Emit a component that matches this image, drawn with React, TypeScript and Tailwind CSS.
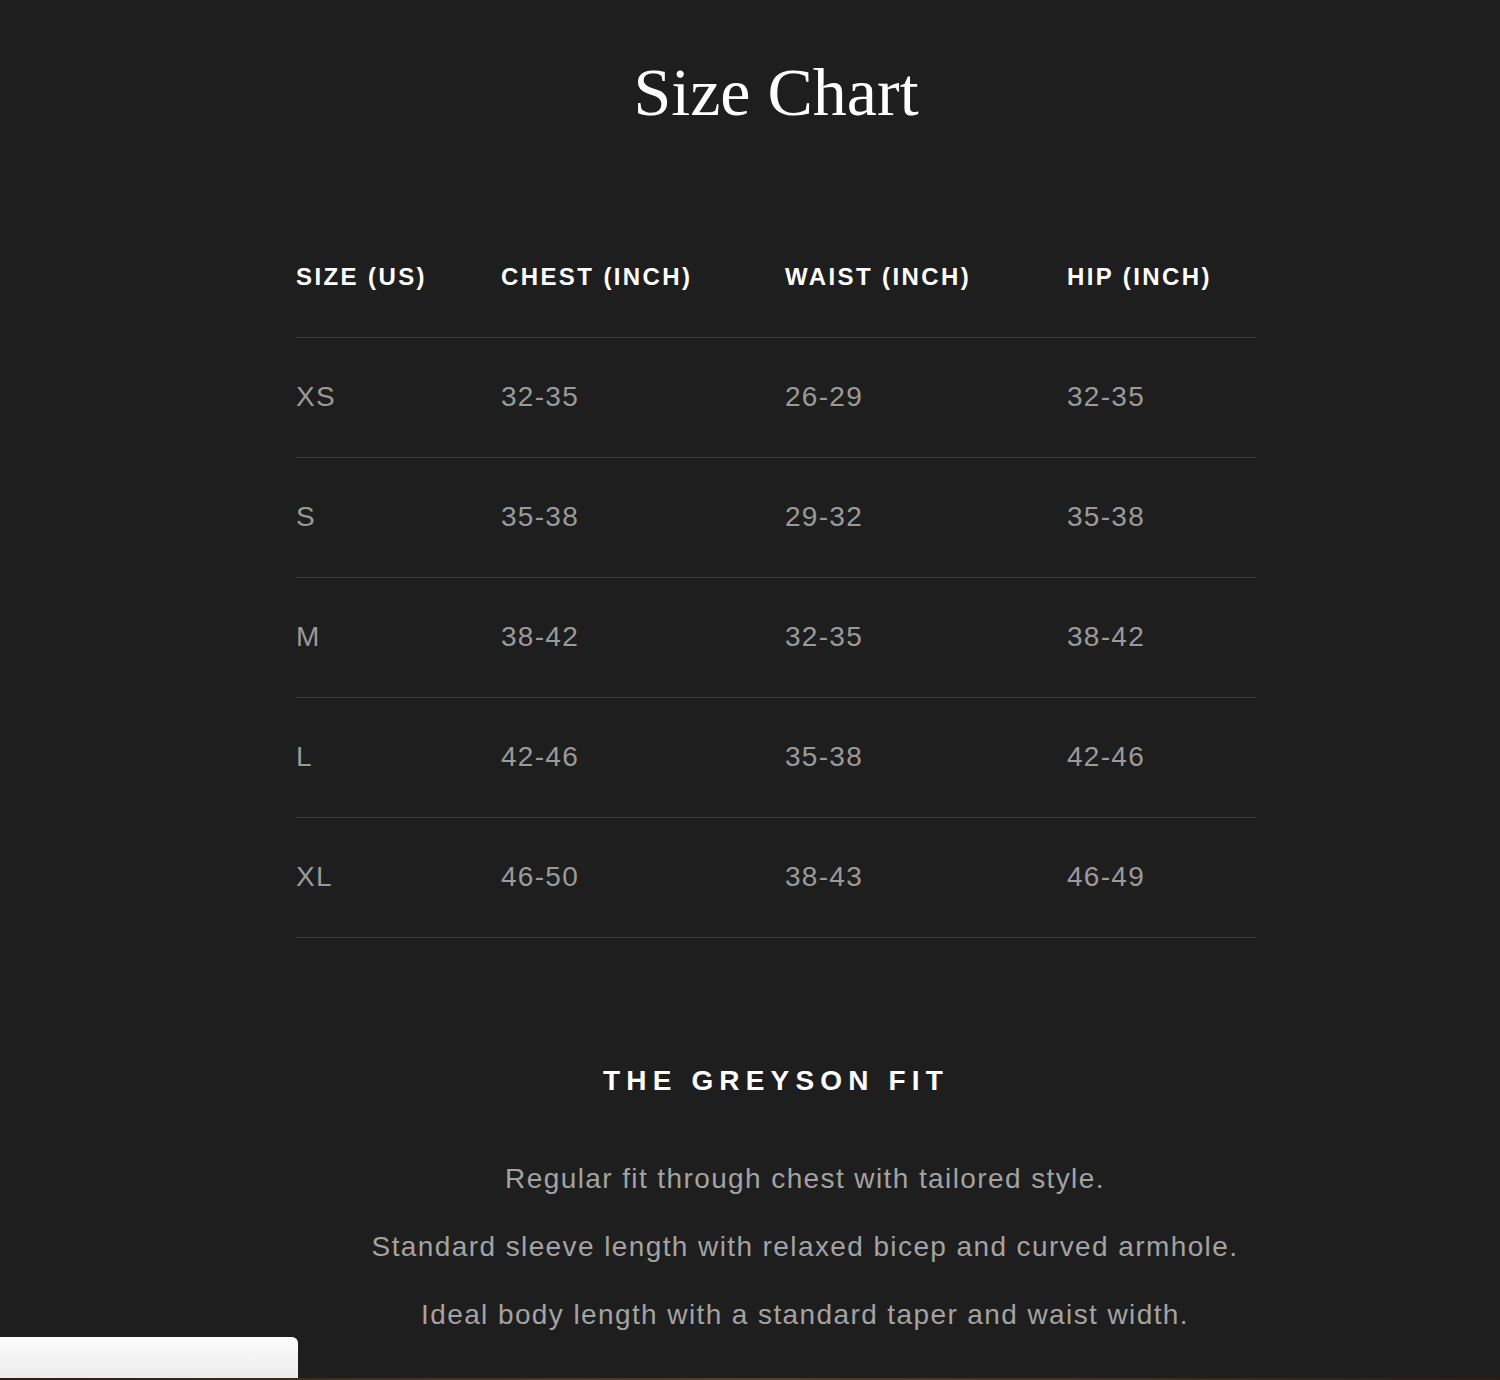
const HEADERS = ['SIZE (US)', 'CHEST (INCH)', 'WAIST (INCH)', 'HIP (INCH)'];

const ROWS: string[][] = [
  ['XS', '32-35', '26-29', '32-35'],
  ['S', '35-38', '29-32', '35-38'],
  ['M', '38-42', '32-35', '38-42'],
  ['L', '42-46', '35-38', '42-46'],
  ['XL', '46-50', '38-43', '46-49'],
];

const FIT_NOTES = [
  'Regular fit through chest with tailored style.',
  'Standard sleeve length with relaxed bicep and curved armhole.',
  'Ideal body length with a standard taper and waist width.',
];

const sans = "font-['Liberation_Sans',Arial,sans-serif]";

export default function App() {
  return (
    <div className="relative h-[1380px] overflow-hidden bg-[#1e1e1e] pl-[52px]">
      {/* ── Title ── */}
      <h1 className="pt-[58px] text-center font-['Liberation_Serif','Times_New_Roman',serif] text-[68px] leading-none font-normal text-white">
        Size Chart
      </h1>

      {/* ── Size table ── */}
      <div className={`mx-auto mt-[92px] w-[960px] ${sans}`}>
        <div className="grid h-[120px] grid-cols-[205px_284px_282px_189px] items-center border-b border-[#3a3a3a] pb-[2px]">
          {HEADERS.map((h) => (
            <div key={h} className="text-[24px] leading-none font-bold tracking-[0.1em] text-white">
              {h}
            </div>
          ))}
        </div>
        {ROWS.map((row) => (
          <div
            key={row[0]}
            className="grid h-[120px] grid-cols-[205px_284px_282px_189px] items-center border-b border-[#3a3a3a] pb-[2px]"
          >
            {row.map((cell, i) => (
              <div key={i} className="text-[28px] leading-none tracking-[1.3px] text-[#9a9a9a]">
                {cell}
              </div>
            ))}
          </div>
        ))}
      </div>

      {/* ── Fit notes ── */}
      <h2 className={`mt-[129px] text-center text-[28px] leading-none font-bold tracking-[0.22em] text-white ${sans}`}>
        THE GREYSON FIT
      </h2>
      <div className={`mt-[50px] pl-[58px] text-center ${sans}`}>
        {FIT_NOTES.map((n) => (
          <p key={n} className="text-[28px] leading-[68px] tracking-[1.4px] text-[#a3a3a3]">
            {n}
          </p>
        ))}
      </div>

      {/* ── Cookie toast peeking from bottom-left ── */}
      <div className="absolute bottom-[2px] left-0 h-[41px] w-[298px] rounded-tr-[6px] bg-gradient-to-b from-[#fcfcfc] to-[#ececec]" />
      <div className="absolute bottom-0 left-0 h-[2px] w-full bg-gradient-to-r from-[#2b1e12] via-[#5a4025] to-[#2b1e12]" />
    </div>
  );
}
